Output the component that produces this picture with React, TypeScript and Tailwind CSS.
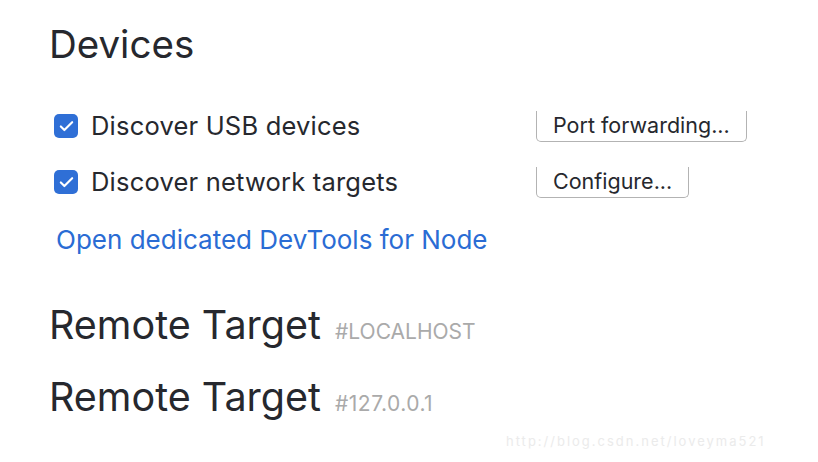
import { Check } from "lucide-react";

const FONT = { fontFamily: "Inter, 'Noto Sans', sans-serif" };

function CheckRow({ label, button }: { label: string; button: string }) {
  return (
    <div className="flex items-center h-[56px]">
      <div className="flex items-center w-[487px]">
        <span className="w-6 h-6 rounded-[5px] bg-[#2f6fd6] flex items-center justify-center ml-[5px]">
          <Check size={17} strokeWidth={3} className="text-white" />
        </span>
        <span className="ml-[13px] text-[25.5px] text-[#26282e] tracking-[0.2px]">{label}</span>
      </div>
      <button className="h-[31px] px-[16px] text-[21.5px] leading-none text-[#26282e] border-x border-b border-[#b3b3b3] rounded-b-[5px] bg-white">
        {button}
      </button>
    </div>
  );
}

export default function App() {
  return (
    <div className="w-[818px] h-[462px] bg-white relative overflow-hidden" style={FONT}>
      <div className="pl-[49px] pt-[22px]">
        <h1 className="text-[38.5px] leading-[44px] text-[#26282e]">Devices</h1>
        <div className="mt-[32px]">
          <CheckRow label="Discover USB devices" button="Port forwarding..." />
          <CheckRow label="Discover network targets" button="Configure..." />
        </div>
        <div className="mt-[12px] pl-[7px] text-[26px] text-[#2a6cd4] leading-[36px]">
          Open dedicated DevTools for Node
        </div>
        <div className="mt-[44px] flex items-baseline">
          <span className="text-[39.5px] leading-[46px] text-[#26282e]">Remote Target</span>
          <span className="ml-[14px] text-[21px] text-[#aaaaaa]">#LOCALHOST</span>
        </div>
        <div className="mt-[26px] flex items-baseline">
          <span className="text-[39.5px] leading-[46px] text-[#26282e]">Remote Target</span>
          <span className="ml-[14px] text-[21px] text-[#aaaaaa] tracking-[0.5px]">#127.0.0.1</span>
        </div>
      </div>
      <div className="absolute left-[506px] top-[432px] text-[13px] text-[#ebebeb] tracking-[2px]">
        http://blog.csdn.net/loveyma521
      </div>
    </div>
  );
}
